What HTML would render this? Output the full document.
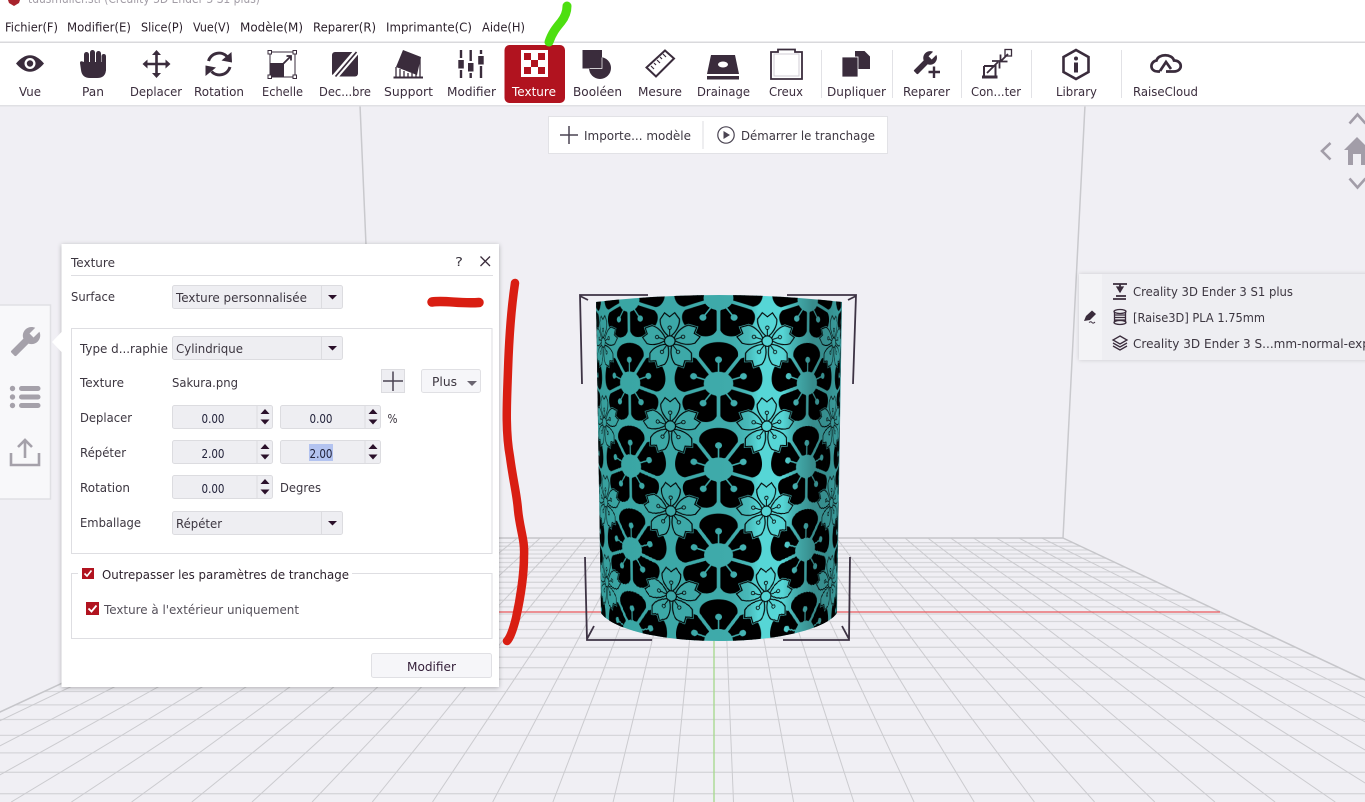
<!DOCTYPE html>
<html lang="fr"><head><meta charset="utf-8"><title>Texture</title>
<style>
html,body{margin:0;padding:0;background:#f0eff4;width:1365px;height:802px;overflow:hidden}
svg{display:block}
text{font-family:"DejaVu Sans","Liberation Sans",sans-serif;font-size:12px;fill:#3a2c3c}
.m{fill:#2a1f2a}
.d{fill:#3c3640}
.i{fill:#3a2c3c}
</style></head><body>
<svg id="s" xmlns="http://www.w3.org/2000/svg" width="1365" height="802" viewBox="0 0 1365 802">
<defs>
<clipPath id="floor"><polygon points="375,538 1063,538 1625,802 -194,802"/></clipPath>
<clipPath id="cyl"><path d="M596,302 Q719,288 842,302 L837,613 C825,630 775,641 719,641 C663,641 613,630 601,613 Z"/></clipPath>
<linearGradient id="shade" x1="596" x2="842" y1="0" y2="0" gradientUnits="userSpaceOnUse">
<stop offset="0" stop-color="#369c9a"/><stop offset=".1" stop-color="#3aa6a4"/><stop offset=".55" stop-color="#3fabab"/>
<stop offset=".62" stop-color="#48b9b9"/><stop offset=".66" stop-color="#56d6d6"/><stop offset=".76" stop-color="#56d6d6"/>
<stop offset=".8" stop-color="#46b2b2"/><stop offset=".88" stop-color="#378c8c"/><stop offset=".94" stop-color="#368f8f"/><stop offset="1" stop-color="#3aa0a0"/>
</linearGradient>
<path id="bp" d="M-8,-12 C-15,-18 -19,-25 -17.500,-32 C-15,-39 -7,-41.500 0,-41.500 C7,-41.500 15,-39 17.500,-32 C19,-25 15,-18 8,-12 C3,-10 -3,-10 -8,-12Z"/>
<g id="bpin"><use href="#bp" fill="#000"/><line x1="0" y1="-10" x2="0" y2="-23" stroke="#fff" stroke-width="1.500"/><circle cx="0" cy="-24" r="3.200" fill="#fff"/></g>
<line id="spk" x1="0" y1="-9" x2="0" y2="-48" stroke="#fff" stroke-width="3.400"/>
<g id="bf" transform="scale(1.08,1)"><use href="#bpin"/><use href="#bpin" transform="rotate(72)"/><use href="#bpin" transform="rotate(144)"/><use href="#bpin" transform="rotate(216)"/><use href="#bpin" transform="rotate(288)"/>
<use href="#spk" transform="rotate(36)"/><use href="#spk" transform="rotate(108)"/><use href="#spk" transform="rotate(180)"/><use href="#spk" transform="rotate(252)"/><use href="#spk" transform="rotate(324)"/>
<ellipse rx="13.500" ry="12" fill="#fff"/></g>
<path id="sp" d="M0,-4 C-5.500,-8 -10,-15 -9.500,-22 L-5,-28.500 L0,-24.500 L5,-28.500 L9.500,-22 C10,-15 5.500,-8 0,-4Z"/>
<g id="spet"><use href="#sp" fill="#fff" stroke="#000" stroke-width="1.100"/><line x1="0" y1="-5" x2="0" y2="-12" stroke="#000" stroke-width=".9"/><circle cy="-13.500" r="1.700" fill="#fff" stroke="#000" stroke-width=".8"/></g>
<g id="sk" transform="scale(1.08,1)">
<g fill="#fff" stroke="#fff" stroke-width="2.400"><use href="#sp"/><use href="#sp" transform="rotate(72)"/><use href="#sp" transform="rotate(144)"/><use href="#sp" transform="rotate(216)"/><use href="#sp" transform="rotate(288)"/></g>
<use href="#spet"/><use href="#spet" transform="rotate(72)"/><use href="#spet" transform="rotate(144)"/><use href="#spet" transform="rotate(216)"/><use href="#spet" transform="rotate(288)"/><circle r="5.200" fill="#fff" stroke="#000" stroke-width="1"/></g>
<pattern id="p" x="0" y="3" width="98" height="85.5" patternUnits="userSpaceOnUse">
<rect width="98" height="85.5" fill="#fff"/>
<use href="#bf" x="0" y="0"/><use href="#bf" transform="translate(98,0)"/><use href="#bf" transform="translate(0,85.5)"/><use href="#bf" transform="translate(98,85.5)"/>
<use href="#sk" transform="translate(49,42.75)"/>
</pattern>
<filter id="sh" x="-10%" y="-10%" width="120%" height="120%"><feDropShadow dx="0" dy="1" stdDeviation="2.500" flood-color="#000" flood-opacity=".28"/></filter>
<filter id="sh2" x="-10%" y="-20%" width="120%" height="140%"><feDropShadow dx="0" dy="0" stdDeviation="2" flood-color="#000" flood-opacity=".16"/></filter>
<path id="wr" d="M22.7 19l-9.1-9.1c.9-2.3.4-5-1.500-6.900-2-2-5-2.400-7.400-1.300L9 6 6 9 1.600 4.700C.4 7.100.9 10.100 2.900 12.100c1.900 1.900 4.600 2.400 6.900 1.500l9.100 9.100c.4.4 1 .4 1.400 0l2.300-2.300c.5-.4.5-1.100.1-1.400z"/>
<g id="spin"><rect x=".5" y=".5" width="100" height="23" rx="2" fill="#eeeef2" stroke="#dcdce0"/><line x1="85" y1="1" x2="85" y2="23" stroke="#dcdce0"/><path d="M88.500 9l4.500-5 4.500 5z M88.500 14.500h9l-4.500 5z" fill="#2a102a"/></g>
<g id="combo"><rect x=".5" y=".5" width="170" height="23" rx="2" fill="#eeeef2" stroke="#dcdce0"/><line x1="149.5" y1="1" x2="149.5" y2="23" stroke="#dcdce0"/><path d="M156 10h9l-4.500 4.500z" fill="#2a102a"/></g>
</defs>

<rect width="1365" height="802" fill="#f0eff4"/>
<path d="M360,105 L366,245 L375,538 M1085,105 L1063,538" stroke="#c9c9cd" stroke-width="1.500" fill="none"/>
<g id="grid" clip-path="url(#floor)"></g>
<path d="M375,538 H1063 M375,538 L-194,802 M1063,538 L1625,802" stroke="#c6c6ca" stroke-width="1.500" fill="none"/>
<line x1="480" y1="612" x2="1220" y2="612" stroke="#e9585c" stroke-width="1.200"/>
<line x1="714" y1="636" x2="714" y2="802" stroke="#a9da92" stroke-width="1.400"/>

<g id="cylwrap"><g id="cylg" clip-path="url(#cyl)"></g>
<rect x="590" y="285" width="260" height="365" fill="url(#shade)" clip-path="url(#cyl)" style="mix-blend-mode:multiply"/></g>

<g fill="none" stroke="#3d3344" stroke-width="1.800">
<path d="M648,295 H580 L582,384 M580,296 L588,300"/>
<path d="M787,295 H856 L853,384 M856,296 L848,300"/>
<path d="M585,557 L587,640 H652 M587,639 L594,626"/>
<path d="M850,557 L849,640 H783 M849,639 L842,626"/>
</g>

<!-- top -->
<rect width="1365" height="105" fill="#fff"/>
<path d="M8,0 L20,0 L19,3 L14,6 L9,3Z" fill="#a8232c"/>
<text x="28" y="3" textLength="232" lengthAdjust="spacingAndGlyphs" style="fill:#a29da6">tdusmuller.stl (Creality 3D Ender 3 S1 plus)</text>
<g class="menu">
<text class="m" x="5" y="31.500" textLength="53" lengthAdjust="spacingAndGlyphs">Fichier(F)</text>
<text class="m" x="67" y="31.500" textLength="64" lengthAdjust="spacingAndGlyphs">Modifier(E)</text>
<text class="m" x="141" y="31.500" textLength="42" lengthAdjust="spacingAndGlyphs">Slice(P)</text>
<text class="m" x="193" y="31.500" textLength="37" lengthAdjust="spacingAndGlyphs">Vue(V)</text>
<text class="m" x="240" y="31.500" textLength="63" lengthAdjust="spacingAndGlyphs">Modèle(M)</text>
<text class="m" x="313" y="31.500" textLength="63" lengthAdjust="spacingAndGlyphs">Reparer(R)</text>
<text class="m" x="386" y="31.500" textLength="86" lengthAdjust="spacingAndGlyphs">Imprimante(C)</text>
<text class="m" x="482" y="31.500" textLength="43" lengthAdjust="spacingAndGlyphs">Aide(H)</text>
</g>
<rect y="41.500" width="1365" height="1.500" fill="#d9d9dc"/>
<rect y="105" width="1365" height="1.500" fill="#e0e0e4"/>
<rect x="504.500" y="45" width="60.500" height="58" rx="5" fill="#b1131f"/>
<path d="M821.500 50V98M892.500 50V98M961.500 50V98M1031.500 50V98M1121.500 50V98" stroke="#e2e2e6"/>

<g class="labels">
<text x="19" y="96" textLength="22" lengthAdjust="spacingAndGlyphs">Vue</text>
<text x="82" y="96" textLength="22" lengthAdjust="spacingAndGlyphs">Pan</text>
<text x="130" y="96" textLength="52" lengthAdjust="spacingAndGlyphs">Deplacer</text>
<text x="194" y="96" textLength="50" lengthAdjust="spacingAndGlyphs">Rotation</text>
<text x="262" y="96" textLength="41" lengthAdjust="spacingAndGlyphs">Echelle</text>
<text x="319" y="96" textLength="52" lengthAdjust="spacingAndGlyphs">Dec...bre</text>
<text x="384" y="96" textLength="49" lengthAdjust="spacingAndGlyphs">Support</text>
<text x="447" y="96" textLength="49" lengthAdjust="spacingAndGlyphs">Modifier</text>
<text x="512" y="96" textLength="44" lengthAdjust="spacingAndGlyphs" style="fill:#fff">Texture</text>
<text x="573" y="96" textLength="49" lengthAdjust="spacingAndGlyphs">Booléen</text>
<text x="638" y="96" textLength="44" lengthAdjust="spacingAndGlyphs">Mesure</text>
<text x="697" y="96" textLength="53" lengthAdjust="spacingAndGlyphs">Drainage</text>
<text x="769" y="96" textLength="34" lengthAdjust="spacingAndGlyphs">Creux</text>
<text x="827" y="96" textLength="59" lengthAdjust="spacingAndGlyphs">Dupliquer</text>
<text x="903" y="96" textLength="47" lengthAdjust="spacingAndGlyphs">Reparer</text>
<text x="971" y="96" textLength="50" lengthAdjust="spacingAndGlyphs">Con...ter</text>
<text x="1056" y="96" textLength="41" lengthAdjust="spacingAndGlyphs">Library</text>
<text x="1133" y="96" textLength="65" lengthAdjust="spacingAndGlyphs">RaiseCloud</text>
</g>

<!-- toolbar icons -->
<g fill="#3a2c3c">
<path d="M16,63.500 Q30,47 44,63.500 Q30,80 16,63.500Z"/><circle cx="30" cy="63.500" r="5.500" fill="#fff"/><circle cx="30" cy="63.500" r="3.200"/>
<rect x="84" y="52" width="5" height="20" rx="2.500"/><rect x="90" y="50" width="5" height="20" rx="2.500"/><rect x="96" y="51" width="5" height="20" rx="2.500"/><rect x="101.500" y="54" width="4.500" height="18" rx="2.200"/>
<path d="M80,63 Q80,60 84,62 L106,62 V69 Q106,78 97,78 H90 Q82,78 81,70Z"/>
<path d="M156.500,50 l4.500,5 h-3.200 v7.700 h7.700 v-3.200 l5,4.500 -5,4.500 v-3.200 h-7.700 v7.700 h3.200 l-4.500,5 -4.500,-5 h3.200 v-7.700 h-7.700 v3.200 l-5,-4.500 5,-4.500 v3.200 h7.700 v-7.700 h-3.200z"/>
<path d="M208.500,61 A11,11 0 0 1 227,56.500 M230,67 A11,11 0 0 1 211.500,71.500" fill="none" stroke="#3a2c3c" stroke-width="3"/>
<path d="M231.500,52 L232,62.500 L221.500,60.500Z M205.500,76 L205.500,65.500 L216,67.500Z"/>
<rect x="270" y="52" width="25" height="25" fill="none" stroke="#3a2c3c" stroke-width="1"/>
<rect x="270" y="63" width="14" height="14"/>
<path d="M283,64 L290,57 M286.500,56 H291 V60.500" fill="none" stroke="#3a2c3c" stroke-width="1.800"/>
<g fill="#fff" stroke="#3a2c3c" stroke-width="1"><rect x="268" y="50.500" width="3.500" height="3.500"/><rect x="293" y="50.500" width="3.500" height="3.500"/><rect x="268" y="75" width="3.500" height="3.500"/><rect x="293" y="75" width="3.500" height="3.500"/></g>
<rect x="332" y="52" width="26" height="24.500" rx="3"/>
<path d="M334,78 L358,50" stroke="#fff" stroke-width="6"/><path d="M335.500,76.500 L356.500,52" stroke="#3a2c3c" stroke-width="1.700" fill="none"/>
<path d="M403,50 L421,57 L417,75 L396,67Z"/>
<path d="M396,67 V77 M400,69 V77 M404,71 V77 M408,73 V77 M412,73 V77 M416,70 V77 M420,58 V77" stroke="#3a2c3c" stroke-width="1.300"/>
<rect x="393.500" y="76.500" width="29.500" height="2"/>
<path d="M461,50V58M461,70V78M470.700,50V61M470.700,73V78M481,50V54M481,66V78" stroke="#3a2c3c" stroke-width="2.400"/>
<rect x="458.300" y="60" width="5.500" height="8.500"/><rect x="468" y="63" width="5.500" height="8.500"/><rect x="478.200" y="56" width="5.500" height="8.500"/>
<rect x="582.500" y="50" width="19.500" height="18.500"/>
<circle cx="600" cy="68" r="11"/>
<path d="M589.500,68.500H602V57.500" fill="none" stroke="#fff" stroke-width=".7"/>
<path d="M665,50.500 L674,58.500 L656,76.500 L646.500,67.500Z" fill="none" stroke="#3a2c3c" stroke-width="2"/>
<path d="M651,66 l3,3 M654,63 l2,2 M657,60 l3,3 M660,57 l2,2 M663,54 l3,3" stroke="#3a2c3c" stroke-width="1.200"/>
<path d="M711,55 H735 L739,74 H707Z"/><rect x="707" y="76" width="32" height="3.500"/><ellipse cx="723" cy="64.500" rx="5" ry="3" fill="#fff"/>
<path d="M771,52 H778 V49.500 H795 V52 H802 V79 H771Z" fill="none" stroke="#3a2c3c" stroke-width="1.800"/><rect x="774" y="54" width="25" height="22" fill="none" stroke="#d0ced4" stroke-width="1"/>
<path d="M855,51 H864.500 L870,56.500 V69 H855Z"/>
<rect x="842" y="57" width="16" height="20" stroke="#fff" stroke-width=".8"/>
<use href="#wr" transform="translate(938,50) scale(-1.050,1.050)"/>
<path d="M934,66.500V78M928.500,72H940" stroke="#3a2c3c" stroke-width="2.400"/>
<path d="M984,66 H995.500 V76 M984,66 V76" fill="none" stroke="#3a2c3c" stroke-width="2"/><rect x="982" y="75.500" width="15.500" height="3"/>
<path d="M987,73 L998,62 M992,61 H999.500 V68.500" fill="none" stroke="#3a2c3c" stroke-width="1.800"/>
<path d="M1001,61 L1008,54 M1000.500,54.500 V61.500 H1007.500" fill="none" stroke="#3a2c3c" stroke-width="1.800"/>
<rect x="1005" y="49.500" width="6.500" height="6.500" fill="none" stroke="#3a2c3c" stroke-width="1.300"/>
<path d="M1076,50 L1088.500,57 V72 L1076,79 L1063.500,72 V57Z" fill="none" stroke="#3a2c3c" stroke-width="2.600"/>
<circle cx="1076" cy="58.500" r="2"/><rect x="1074" y="62.500" width="4" height="10"/>
<path d="M1160,71.500 H1158 C1149,71.500 1150,61.500 1156.500,60.500 C1158.500,53.500 1172,53.500 1174,60.500 C1183,60.500 1183,71.500 1174,71.500 H1166 M1160,71 L1166,62 L1171,69" fill="none" stroke="#3a2c3c" stroke-width="2.700"/>
</g>
<rect x="521" y="50" width="27" height="27" fill="#fff"/>
<g fill="#b1131f"><rect x="524" y="53" width="7" height="7"/><rect x="538" y="53" width="7" height="7"/><rect x="531" y="60" width="7" height="7"/><rect x="524" y="67" width="7" height="7"/><rect x="538" y="67" width="7" height="7"/></g>

<!-- import bar -->
<rect x="548.500" y="116.500" width="339" height="37" fill="#fff" stroke="#e2e2e6"/>
<path d="M569,126V144M560,135H578" stroke="#4a4452" stroke-width="1.500"/>
<text class="d" x="584" y="140" textLength="107" lengthAdjust="spacingAndGlyphs">Importe... modèle</text>
<line x1="703" y1="121" x2="703" y2="149" stroke="#dcdce0"/>
<circle cx="726" cy="135" r="8.200" fill="none" stroke="#4a4452" stroke-width="1.200"/><path d="M723.500,131 L730,135 L723.500,139Z" fill="#4a4452"/>
<text class="d" x="741" y="140" textLength="134" lengthAdjust="spacingAndGlyphs">Démarrer le tranchage</text>

<!-- nav -->
<g fill="none" stroke="#a29da8" stroke-width="2.600"><path d="M1349.500,123.500 L1357.500,114.500 L1365.500,123.500"/><path d="M1330.500,143 L1322,151 L1330.500,159.500"/><path d="M1349.500,178.500 L1357.500,187.500 L1365.500,178.500"/></g>
<path d="M1344,150 L1357,137 L1370,150 H1366 V165 H1361 V154 H1353 V165 H1348 V150Z" fill="#a29da8"/>

<!-- right panel -->
<rect x="1079" y="274" width="300" height="86" fill="#eeeef2" filter="url(#sh2)"/>
<rect x="1079" y="274" width="23" height="86" fill="#f3f3f6"/>
<path d="M1084,321 L1086,316 L1092,310.500 L1096,314 L1090,320Z" fill="#3a2c3c"/><path d="M1089,322.500 q2,-1.500 3,0 t3,-.5" stroke="#3a2c3c" fill="none"/>
<g fill="none" stroke="#3a2c3c" stroke-width="1.300">
<path d="M1113,284 H1127 M1120,284 V292 M1116,296 H1126 M1113,299 H1126" stroke-width="1.800"/><path d="M1117,287 H1123 L1120,292Z" fill="#3a2c3c"/>
<ellipse cx="1120" cy="311.500" rx="6" ry="2"/><ellipse cx="1120" cy="322.500" rx="6" ry="2"/><path d="M1114.500,311.500 V322.500 M1125.500,311.500 V322.500 M1115,315 H1125 M1115,317.500 H1125 M1115,320 H1125"/>
<path d="M1120,336 L1127,340 L1120,344 L1113,340Z M1113,343 L1120,347 L1127,343 M1113,346 L1120,350 L1127,346"/>
</g>
<text class="d" x="1133" y="296" textLength="160" lengthAdjust="spacingAndGlyphs">Creality 3D Ender 3 S1 plus</text>
<text class="d" x="1133" y="322" textLength="132" lengthAdjust="spacingAndGlyphs">[Raise3D] PLA 1.75mm</text>
<text class="d" x="1133" y="348" textLength="254" lengthAdjust="spacingAndGlyphs">Creality 3D Ender 3 S...mm-normal-expert</text>

<!-- left tab -->
<rect x="-3" y="305" width="53.500" height="194" fill="#f8f8fa" stroke="#e0e0e4" stroke-width="1.500"/>
<g fill="#a5a1aa">
<use href="#wr" transform="translate(41.500,325.500) scale(-1.330,1.330)"/>
<circle cx="12.500" cy="388.500" r="2.700"/><circle cx="12.500" cy="397" r="2.700"/><circle cx="12.500" cy="405.500" r="2.700"/>
<rect x="19" y="386" width="21.500" height="5" rx="2.500"/><rect x="19" y="394.500" width="21.500" height="5" rx="2.500"/><rect x="19" y="403" width="21.500" height="5" rx="2.500"/>
</g>
<path d="M11,453 V465 H39 V453 M25,458 V441 M18,447 L25,440 L32,447" fill="none" stroke="#a5a1aa" stroke-width="2.600"/>

<!-- dialog -->
<rect x="61.500" y="244" width="437.500" height="443" fill="#fff" filter="url(#sh)"/>
<path d="M61.500,332 L52,342 L61.500,352Z" fill="#fff"/>
<text class="d" x="71" y="267" textLength="44" lengthAdjust="spacingAndGlyphs">Texture</text>
<text class="d" x="455" y="266" textLength="8" lengthAdjust="spacingAndGlyphs">?</text>
<path d="M480.500,256.500 L490,266 M490,256.500 L480.500,266" stroke="#3a2c3c" stroke-width="1.300"/>
<line x1="71" y1="275.500" x2="493" y2="275.500" stroke="#dedee2"/>
<text class="d" x="71" y="301" textLength="44" lengthAdjust="spacingAndGlyphs">Surface</text>
<use href="#combo" x="172" y="285"/>
<text class="d" x="176" y="302" textLength="131" lengthAdjust="spacingAndGlyphs">Texture personnalisée</text>

<rect x="71.500" y="328.500" width="420.500" height="225" fill="#fff" stroke="#dedee2"/>
<text class="d" x="80" y="353" textLength="88" lengthAdjust="spacingAndGlyphs">Type d...raphie</text>
<use href="#combo" x="172" y="336"/>
<text class="d" x="176" y="353" textLength="67" lengthAdjust="spacingAndGlyphs">Cylindrique</text>
<text class="d" x="80" y="387" textLength="44" lengthAdjust="spacingAndGlyphs">Texture</text>
<text class="d" x="172" y="387" textLength="66" lengthAdjust="spacingAndGlyphs">Sakura.png</text>
<rect x="381.500" y="369.500" width="23" height="23" fill="#eeeef2" stroke="#dcdce0"/>
<path d="M393,371.500V391M383,381H403" stroke="#4a4452" stroke-width="1.500"/>
<rect x="421.500" y="369.500" width="59" height="23" rx="2" fill="#f6f6f9" stroke="#e0e0e4"/>
<text class="d" x="432" y="386" textLength="25" lengthAdjust="spacingAndGlyphs">Plus</text>
<path d="M467,381h10l-5,5z" fill="#6a6570"/>
<text class="d" x="80" y="422" textLength="52" lengthAdjust="spacingAndGlyphs">Deplacer</text>
<use href="#spin" x="172" y="405"/><use href="#spin" x="280" y="405"/>
<text x="201.500" y="423" textLength="23" lengthAdjust="spacingAndGlyphs" style="fill:#22223a">0.00</text>
<text x="309.500" y="423" textLength="23" lengthAdjust="spacingAndGlyphs" style="fill:#22223a">0.00</text>
<text class="d" x="387.500" y="423" textLength="10" lengthAdjust="spacingAndGlyphs">%</text>
<text class="d" x="80" y="457" textLength="46" lengthAdjust="spacingAndGlyphs">Répéter</text>
<use href="#spin" x="172" y="440"/><use href="#spin" x="280" y="440"/>
<rect x="309" y="444" width="24" height="17" fill="#b3c3f0"/>
<text x="201.500" y="458" textLength="23" lengthAdjust="spacingAndGlyphs" style="fill:#22223a">2.00</text>
<text x="309.500" y="458" textLength="23" lengthAdjust="spacingAndGlyphs" style="fill:#22223a">2.00</text>
<text class="d" x="80" y="492" textLength="50" lengthAdjust="spacingAndGlyphs">Rotation</text>
<use href="#spin" x="172" y="475"/>
<text x="201.500" y="493" textLength="23" lengthAdjust="spacingAndGlyphs" style="fill:#22223a">0.00</text>
<text class="d" x="280" y="492" textLength="41" lengthAdjust="spacingAndGlyphs">Degres</text>
<text class="d" x="80" y="527" textLength="61" lengthAdjust="spacingAndGlyphs">Emballage</text>
<use href="#combo" x="172" y="511"/>
<text class="d" x="176" y="528" textLength="46" lengthAdjust="spacingAndGlyphs">Répéter</text>

<rect x="71.500" y="573.500" width="420.500" height="65" fill="#fff" stroke="#dedee2"/>
<rect x="78" y="570" width="274" height="7" fill="#fff"/>
<rect x="82" y="568" width="12" height="11" fill="#b1131f"/>
<path d="M84.500,573.500 L87,576 L91.500,570.500" fill="none" stroke="#fff" stroke-width="1.600"/>
<text x="102" y="579" textLength="247" lengthAdjust="spacingAndGlyphs" style="fill:#2a1f2a">Outrepasser les paramètres de tranchage</text>
<rect x="86" y="602" width="13" height="13" fill="#b1131f"/>
<path d="M88.500,608.500 L91.500,611.500 L96.500,605.500" fill="none" stroke="#fff" stroke-width="1.800"/>
<text x="104" y="614" textLength="195" lengthAdjust="spacingAndGlyphs" style="fill:#55505a">Texture à l'extérieur uniquement</text>
<rect x="371.500" y="653.500" width="120" height="24" rx="2" fill="#f6f6f9" stroke="#e0e0e4"/>
<text x="407" y="671" textLength="49" lengthAdjust="spacingAndGlyphs" style="fill:#35203a">Modifier</text>

<!-- annotations -->
<g fill="none" stroke-linecap="round" stroke-linejoin="round">
<path d="M432,302 C445,300 460,304 479,302.500" stroke="#d91e12" stroke-width="9.500"/>
<path d="M515,283 C511,310 509,340 508,370 C507,400 505,430 510,457 C513,480 517,495 518,510 C520,530 525,540 524,556 C524,575 520,600 516,618 C513,630 510,638 507,641" stroke="#d91e12" stroke-width="8.500"/>
<path d="M567,6 C567,12 565,17 561,22 C556,28 552,33 549,42" stroke="#4ddf10" stroke-width="9"/>
</g>
</svg>
<script>
(function(){
var NS="http://www.w3.org/2000/svg";
function el(n,a,p){var e=document.createElementNS(NS,n);for(var k in a)e.setAttribute(k,a[k]);p.appendChild(e);return e;}
var grid=document.getElementById("grid");
var vx=716,vy=377;
for(var n=0;n<=30;n++){
  var y=vy+1/(0.0024+0.00013*n);
  if(n>=29)y=Math.min(y,538);
  el("line",{x1:-300,x2:1700,y1:y.toFixed(1),y2:y.toFixed(1),stroke:"#d6d6da","stroke-width":1.3},grid);
}
for(var i=-15;i<=15;i++){
  var dx=(i+0.29)*22.8;
  var s=(802-538)/161+1;
  el("line",{x1:(vx+dx).toFixed(1),y1:538,x2:(vx+dx*s).toFixed(1),y2:802,stroke:"#cbcbcf","stroke-width":1},grid);
}
var g=document.getElementById("cylg");
function map(u,v){
  var t=u/119.5,c=Math.cos(t),sn=Math.sin(t);
  var R=123-5*v/345;
  var top=302-7*c,bot=613+28*c;
  return {x:718.5+R*sn,y:top+(v/345)*(bot-top)};
}
var N=90,U=187,du=2*U/N;
for(var j=0;j<N;j++){
  var u0=-U+j*du,u1=u0+du;
  var a0=map(u0,0),a1=map(u1,0),a2=map(u0,345);
  var a=(a1.x-a0.x)/du,b=(a1.y-a0.y)/du,c=(a2.x-a0.x)/345,d=(a2.y-a0.y)/345;
  var e=a0.x-a*u0,f=a0.y-b*u0;
  el("rect",{x:u0,y:-6,width:du*1.15,height:357,fill:"url(#p)",transform:"matrix("+[a,b,c,d,e,f].map(function(q){return q.toFixed(4)}).join(",")+")"},g);
}
})();
</script>
</body></html>
